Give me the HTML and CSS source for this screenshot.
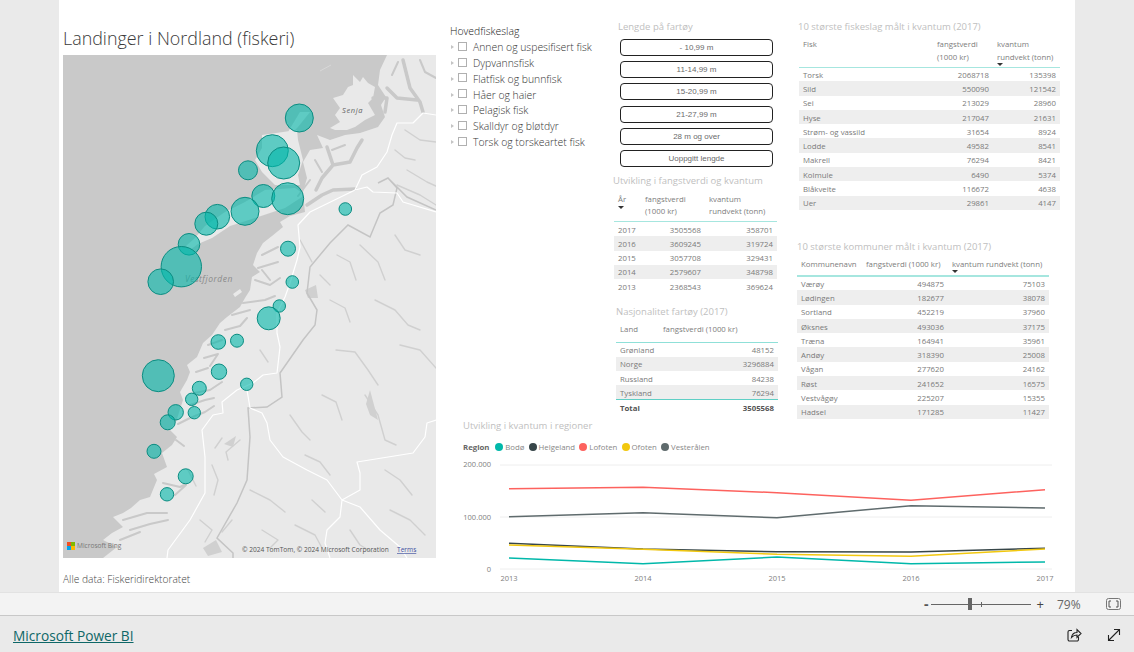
FILE: index.html
```html
<!DOCTYPE html>
<html lang="no">
<head>
<meta charset="utf-8">
<title>Landinger i Nordland (fiskeri)</title>
<link rel="stylesheet" href="styles.css">
</head>
<body>
<main class="stage">
  <div class="canvas">
    <section class="left-col">
      <h1 class="report-title">Landinger i Nordland (fiskeri)</h1>
      <svg class="map" viewBox="63 55 373 503" role="img" aria-label="Kart over Nordland">
        <rect class="sea" x="63" y="55" width="373" height="503"/>
        <path class="land" d="M436 55V558H103L117 547 103 540 112 533 123 527 113 517 123 513 131 508 140 500 150 497 157 480 154 474 167 467 162 453 172 445 177 437 170 430 176 422 183 400 180 392 187 380 190 372 187 365 197 357 203 343 212 335 220 323 227 317 240 307 245 298 250 290 252 277 260 272 253 265 257 253 263 243 272 236 283 227 280 222 290 216 305 212 303 192 307 178 303 162 310 150 323 148 317 135 330 140 345 135 360 133 378 127 385 117 381 105 386 97 378 85 380 70 387 55Z"/>
        <path class="land" d="M353 75 360 82 363 77 368 83 375 87 373 98 368 103 375 115 365 120 355 127 347 130 335 130 330 128 340 122 335 115 340 108 333 98 343 95 348 87 353 85ZM262 135 283 132 297 130 298 140 303 160 298 175 300 185 275 185 262 172 255 160 262 148ZM310 112 298 127 295 130 288 132 300 112ZM186 246 195 238 205 226 225 212 245 202 265 190 295 188 305 195 285 208 255 218 230 226 212 238 198 244 190 250ZM233 294 240 289 242 292 235 297Z"/>
        <path class="fjord-wide" d="M307 205 322 195 333 190 355 189M333 165 350 162 357 148 362 140M327 147 333 165 322 178 316 190M403 60 410 88 420 102 423 112M387 88 397 98 417 100M373 98 387 98 385 112"/>
        <path class="fjord" d="M420 60 425 72 436 78M398 62 392 75M332 150 345 145M315 160 322 172M310 180 298 196M262 255 278 247M258 268 278 262M270 280 262 270M255 280 270 285 280 278M243 303 265 300 275 296M232 315 250 310M225 330 240 326 247 318M208 345 222 340M204 358 218 354 210 366M196 372 208 368M194 393 210 390 222 382M190 405 205 400 214 398M178 424 190 418 205 412 214 406M176 440 184 446M163 483 180 487 186 484M175 495 186 485M123 520 147 513 167 513M130 530 150 524 168 520M120 540 140 532"/>
        <path class="water" d="M397 185 420 195 436 205M407 170 427 182 436 186M405 130 420 140 436 142M395 150 405 158 415 160M360 245 378 262 385 280M395 235 405 250 420 255M337 255 350 262 356 280M330 300 345 308 350 322M375 300 395 310 408 325 420 330M400 345 420 350 436 368M336 350 355 352 368 370 378 385M322 395 336 402 342 420M290 415 302 432 310 440M365 395 378 415 385 440 396 445M305 455 320 462 330 475M385 470 400 480 412 495M240 440 226 452 228 460M212 465 218 480 214 495M250 490 270 500 285 512M295 525 315 535 322 548M350 530 360 545 372 552M390 510 410 520 425 535M200 520 212 530 205 542M300 240 312 262M320 275 330 285M260 350 268 362M215 448 222 438M312 500 325 512M262 530 278 540 270 548M188 470 196 486M232 520 222 532"/>
        <path class="lake" d="M224 444 236 436 233 447ZM366 404 370 390 374 405 378 420 370 415ZM305 290 316 285 318 298 308 298ZM203 548 216 540 222 552 208 556Z"/>
        <path class="border-line" d="M378 183 388 178 397 188 393 205 380 213 370 237 348 225 330 243 310 267 307 293 317 310 315 325 303 340 280 373 282 397 267 407 248 408 250 437 247 480 237 503 217 538 233 553V558M388 178 407 197 436 210"/>
        <path class="road" d="M436 115 423 113 413 123 397 123 392 135 387 152 377 167 362 175 355 190 310 212 298 225 300 247 297 260 290 283 285 297 277 313 277 333 280 347 277 373 263 375 253 383 237 390 222 402 223 413 213 415 202 430 205 457 205 493 190 520 168 550 167 558M355 190 367 187 373 192 397 193 403 202 436 212M247 390 250 408 262 413 267 423 270 440 283 457 307 470 327 480 342 500 360 490 360 473 357 462 413 453 425 437 427 423 436 420M342 500 340 517 327 530 325 543 330 558M342 500 360 507 380 530 400 547 407 558"/>
        <path class="streak" d="M320 71 331 65"/>
        <text class="place" x="342" y="113">Senja</text>
        <text class="place place-wide" x="185" y="282">Vestfjorden</text>
        <g class="bubbles">
          <circle cx="299.3" cy="118" r="14"/><circle cx="272.3" cy="150.7" r="16"/><circle cx="283.7" cy="163" r="16"/>
          <circle cx="248" cy="170.3" r="9.5"/><circle cx="263.3" cy="196" r="11.5"/><circle cx="287.7" cy="198.7" r="16"/>
          <circle cx="245" cy="211.3" r="14"/><circle cx="217.3" cy="216.7" r="12.3"/><circle cx="206.3" cy="223.7" r="11.5"/>
          <circle cx="189" cy="244.3" r="10.8"/><circle cx="181.3" cy="266.7" r="20.2"/><circle cx="160.7" cy="281.7" r="12.8"/>
          <circle cx="345.3" cy="209" r="6.3"/><circle cx="288" cy="248.7" r="7.5"/><circle cx="292.3" cy="282" r="6.3"/>
          <circle cx="279.3" cy="306" r="6.2"/><circle cx="268.7" cy="318.3" r="11.5"/><circle cx="218.3" cy="342" r="7.3"/>
          <circle cx="237" cy="340.7" r="6.5"/><circle cx="158.3" cy="375.7" r="16"/><circle cx="219" cy="371.7" r="7.7"/>
          <circle cx="199.3" cy="388.3" r="7"/><circle cx="246.7" cy="384.3" r="6.2"/><circle cx="191.7" cy="399.3" r="6.2"/>
          <circle cx="175.7" cy="412.3" r="7.7"/><circle cx="194.3" cy="412.7" r="6.2"/><circle cx="167.7" cy="422.3" r="7.5"/>
          <circle cx="154" cy="451.3" r="7"/><circle cx="185.7" cy="476.3" r="7.5"/><circle cx="167" cy="494.3" r="6.7"/>
        </g>
        <rect class="ms-red" x="67" y="542" width="4" height="4"/><rect class="ms-green" x="71" y="542" width="4" height="4"/>
        <rect class="ms-blue" x="67" y="546" width="4" height="4"/><rect class="ms-yellow" x="71" y="546" width="4" height="4"/>
        <text class="attrib attrib-bing" x="77" y="548">Microsoft Bing</text>
        <text class="attrib" x="242" y="552">© 2024 TomTom, © 2024 Microsoft Corporation</text>
        <text class="attrib terms" x="397" y="552">Terms</text>
      </svg>
      <p class="caption">Alle data: Fiskeridirektoratet</p>
    </section>

    <div class="right-area">
      <div class="top-row">
        <section class="slicer">
          <h2 class="slicer-title">Hovedfiskeslag</h2>
          <ul class="slicer-list">
            <li class="slicer-item"><span class="chevron"></span><span class="check"></span>Annen og uspesifisert fisk</li>
            <li class="slicer-item"><span class="chevron"></span><span class="check"></span>Dypvannsfisk</li>
            <li class="slicer-item"><span class="chevron"></span><span class="check"></span>Flatfisk og bunnfisk</li>
            <li class="slicer-item"><span class="chevron"></span><span class="check"></span>Håer og haier</li>
            <li class="slicer-item"><span class="chevron"></span><span class="check"></span>Pelagisk fisk</li>
            <li class="slicer-item"><span class="chevron"></span><span class="check"></span>Skalldyr og bløtdyr</li>
            <li class="slicer-item"><span class="chevron"></span><span class="check"></span>Torsk og torskeartet fisk</li>
          </ul>
        </section>

        <section class="mid-col">
          <h2 class="visual-title title-length">Lengde på fartøy</h2>
          <div class="length-buttons">
            <button class="length-btn">- 10,99 m</button>
            <button class="length-btn">11-14,99 m</button>
            <button class="length-btn">15-20,99 m</button>
            <button class="length-btn">21-27,99 m</button>
            <button class="length-btn">28 m og over</button>
            <button class="length-btn">Uoppgitt lengde</button>
          </div>
          <h2 class="visual-title title-dev">Utvikling i fangstverdi og kvantum</h2>
          <table class="data t-dev">
            <colgroup><col class="c27"><col class="c64"><col class="c72"></colgroup>
            <thead><tr><th>År<span class="sort"></span></th><th>fangstverdi<br>(1000 kr)</th><th>kvantum<br>rundvekt (tonn)</th></tr></thead>
            <tbody>
              <tr><td>2017</td><td class="num">3505568</td><td class="num">358701</td></tr>
              <tr><td>2016</td><td class="num">3609245</td><td class="num">319724</td></tr>
              <tr><td>2015</td><td class="num">3057708</td><td class="num">329431</td></tr>
              <tr><td>2014</td><td class="num">2579607</td><td class="num">348798</td></tr>
              <tr><td>2013</td><td class="num">2368543</td><td class="num">369624</td></tr>
            </tbody>
          </table>
          <h2 class="visual-title title-nat">Nasjonalitet fartøy (2017)</h2>
          <table class="data t-nat">
            <colgroup><col class="c43"><col class="c119"></colgroup>
            <thead><tr><th>Land</th><th>fangstverdi (1000 kr)</th></tr></thead>
            <tbody>
              <tr><td>Grønland</td><td class="num">48152</td></tr>
              <tr><td>Norge</td><td class="num">3296884</td></tr>
              <tr><td>Russland</td><td class="num">84238</td></tr>
              <tr><td>Tyskland</td><td class="num">76294</td></tr>
            </tbody>
            <tfoot><tr><td>Total</td><td class="num">3505568</td></tr></tfoot>
          </table>
        </section>

        <section class="right-col">
          <h2 class="visual-title title-fish">10 største fiskeslag målt i kvantum (2017)</h2>
          <table class="data t-fish">
            <colgroup><col class="c134"><col class="c60"><col class="c67"></colgroup>
            <thead><tr><th>Fisk</th><th>fangstverdi<br>(1000 kr)</th><th>kvantum<br>rundvekt (tonn)<span class="sort sort-tight"></span></th></tr></thead>
            <tbody>
              <tr><td>Torsk</td><td class="num">2068718</td><td class="num">135398</td></tr>
              <tr><td>Sild</td><td class="num">550090</td><td class="num">121542</td></tr>
              <tr><td>Sei</td><td class="num">213029</td><td class="num">28960</td></tr>
              <tr><td>Hyse</td><td class="num">217047</td><td class="num">21631</td></tr>
              <tr><td>Strøm- og vassild</td><td class="num">31654</td><td class="num">8924</td></tr>
              <tr><td>Lodde</td><td class="num">49582</td><td class="num">8541</td></tr>
              <tr><td>Makrell</td><td class="num">76294</td><td class="num">8421</td></tr>
              <tr><td>Kolmule</td><td class="num">6490</td><td class="num">5374</td></tr>
              <tr><td>Blåkveite</td><td class="num">116672</td><td class="num">4638</td></tr>
              <tr><td>Uer</td><td class="num">29861</td><td class="num">4147</td></tr>
            </tbody>
          </table>
          <h2 class="visual-title title-mun">10 største kommuner målt i kvantum (2017)</h2>
          <table class="data t-mun">
            <colgroup><col class="c65"><col class="c86"><col class="c101"></colgroup>
            <thead><tr><th>Kommunenavn</th><th>fangstverdi (1000 kr)</th><th>kvantum rundvekt (tonn)<span class="sort sort-tight"></span></th></tr></thead>
            <tbody>
              <tr><td>Værøy</td><td class="num">494875</td><td class="num">75103</td></tr>
              <tr><td>Lødingen</td><td class="num">182677</td><td class="num">38078</td></tr>
              <tr><td>Sortland</td><td class="num">452219</td><td class="num">37960</td></tr>
              <tr><td>Øksnes</td><td class="num">493036</td><td class="num">37175</td></tr>
              <tr><td>Træna</td><td class="num">164941</td><td class="num">35961</td></tr>
              <tr><td>Andøy</td><td class="num">318390</td><td class="num">25008</td></tr>
              <tr><td>Vågan</td><td class="num">277620</td><td class="num">24162</td></tr>
              <tr><td>Røst</td><td class="num">241652</td><td class="num">16575</td></tr>
              <tr><td>Vestvågøy</td><td class="num">225207</td><td class="num">15355</td></tr>
              <tr><td>Hadsel</td><td class="num">171285</td><td class="num">11427</td></tr>
            </tbody>
          </table>
        </section>
      </div>

      <section class="chart">
        <h2 class="visual-title chart-title">Utvikling i kvantum i regioner</h2>
        <ul class="legend">
          <li class="legend-name">Region</li>
          <li class="legend-item"><span class="dot dot-bodo"></span>Bodø</li>
          <li class="legend-item"><span class="dot dot-helge"></span>Helgeland</li>
          <li class="legend-item"><span class="dot dot-lofoten"></span>Lofoten</li>
          <li class="legend-item"><span class="dot dot-ofoten"></span>Ofoten</li>
          <li class="legend-item"><span class="dot dot-vest"></span>Vesterålen</li>
        </ul>
        <svg class="line-chart" viewBox="463 456 597 130" role="img" aria-label="Linjediagram">
          <line class="grid" x1="500" y1="465" x2="1052" y2="465"/>
          <line class="grid" x1="500" y1="517" x2="1052" y2="517"/>
          <line class="grid" x1="500" y1="569" x2="1052" y2="569"/>
          <text class="axis" x="491" y="467" text-anchor="end">200.000</text>
          <text class="axis" x="491" y="520" text-anchor="end">100.000</text>
          <text class="axis" x="491" y="572" text-anchor="end">0</text>
          <text class="axis" x="509" y="581" text-anchor="middle">2013</text>
          <text class="axis" x="643" y="581" text-anchor="middle">2014</text>
          <text class="axis" x="777" y="581" text-anchor="middle">2015</text>
          <text class="axis" x="911" y="581" text-anchor="middle">2016</text>
          <text class="axis" x="1045" y="581" text-anchor="middle">2017</text>
          <polyline class="ln ln-lofoten" points="509,488.7 643,487.3 777,492.7 911,500.3 1045,489.7"/>
          <polyline class="ln ln-vest" points="509,516.7 643,512.7 777,517.7 911,505.7 1045,508"/>
          <polyline class="ln ln-helge" points="509,543.3 643,549 777,551.7 911,552 1045,548.3"/>
          <polyline class="ln ln-ofoten" points="509,545 643,549.3 777,554.3 911,556.3 1045,549"/>
          <polyline class="ln ln-bodo" points="509,558 643,563.7 777,557 911,563.7 1045,562"/>
        </svg>
      </section>
    </div>
  </div>
</main>

<div class="statusbar">
  <span class="zoom-minus">-</span>
  <div class="slider"><span class="slider-tick"></span><span class="slider-thumb"></span></div>
  <span class="zoom-plus">+</span>
  <span class="zoom-value">79%</span>
  <svg class="fit-icon" viewBox="0 0 15 12" aria-hidden="true">
    <rect class="fit-frame" x="0.5" y="0.5" width="14" height="11" rx="2"/>
    <path class="fit-corner" d="M5 3H3v6h2M10 3h2v6h-2"/>
  </svg>
</div>

<footer class="footer">
  <a class="pbi-link" href="#">Microsoft Power BI</a>
  <div class="footer-icons">
    <svg class="foot-icon" viewBox="0 0 16 16" aria-hidden="true">
      <path d="M6 3.5H3.5A1.5 1.5 0 0 0 2 5v7.5A1.5 1.5 0 0 0 3.5 14H11a1.5 1.5 0 0 0 1.5-1.5V10"/>
      <path d="M5.5 10.5C6 7.5 8.300 5.500 11 5.500V2.500L15 6.500 11 10.500V8C9 8 7 8.800 5.500 10.500Z"/>
    </svg>
    <svg class="foot-icon" viewBox="0 0 16 16" aria-hidden="true">
      <path d="M2.500 13.500 13.500 2.500M8 2.500H13.500V8M2.500 8V13.500H8"/>
    </svg>
  </div>
</footer>
</body>
</html>
```

FILE: styles.css
```css
* { box-sizing: border-box; }
html, body { margin: 0; height: 652px; overflow: hidden; }
body {
  display: flex;
  flex-direction: column;
  font-family: "Open Sans", "Noto Sans", "Liberation Sans", sans-serif;
  background: #eaeaea;
  color: #555;
}
h1, h2, p, ul { margin: 0; padding: 0; font-weight: 400; }
ul { list-style: none; }

.stage { height: 592px; padding: 0 59px; background: #eaeaea; }
.canvas { display: flex; height: 592px; padding-left: 4px; background: #fff; }

.left-col { width: 373px; flex: none; }
.report-title {
  height: 24px;
  margin: 26px 0 5px;
  font-size: 17.900px;
  line-height: 24px;
  font-weight: 300;
  color: #3a3a3a;
  white-space: nowrap;
}
.map { display: block; width: 373px; height: 503px; }
.sea { fill: #c9c9c9; }
.land { fill: #e9e9e9; }
.fjord-wide { fill: none; stroke: #c9c9c9; stroke-width: 3.500; stroke-linejoin: round; stroke-linecap: round; }
.fjord { fill: none; stroke: #c9c9c9; stroke-width: 2; stroke-linejoin: round; stroke-linecap: round; }
.water { fill: none; stroke: #d0d0d0; stroke-width: 1.400; stroke-linejoin: round; stroke-linecap: round; }
.lake { fill: #d0d0d0; }
.border-line { fill: none; stroke: #c4c4c4; stroke-width: 1.500; }
.road { fill: none; stroke: #fff; stroke-width: 1.200; stroke-linejoin: round; }
.streak { fill: none; stroke: #d8d8d8; stroke-width: 1; }
.place { font-size: 7.500px; font-style: italic; letter-spacing: .6px; fill: #666; }
.place-wide { font-size: 8.500px; letter-spacing: .5px; fill: #8a8a8a; }
.bubbles circle { fill: #01b8aa; fill-opacity: .6; stroke: #0b8c81; stroke-width: 1; }
.ms-red { fill: #f25022; }
.ms-green { fill: #7fba00; }
.ms-blue { fill: #00a4ef; }
.ms-yellow { fill: #ffb900; }
.attrib { font-size: 6.600px; fill: #555; }
.attrib-bing { fill: #777; }
.terms { fill: #3f4f9f; text-decoration: underline; }
.caption { margin-top: 14px; font-size: 10.200px; line-height: 14px; font-weight: 300; color: #444; }

.right-area { margin-left: 14px; flex: 1; min-width: 0; }
.top-row { display: flex; height: 419px; }

.slicer { width: 163px; flex: none; padding-top: 24px; }
.slicer-title { font-size: 10.400px; line-height: 14px; font-weight: 300; color: #222; }
.slicer-list { margin-top: 1.400px; }
.slicer-item { display: flex; align-items: center; height: 15.800px; font-size: 10.400px; font-weight: 300; color: #333; white-space: nowrap; }
.chevron {
  width: 0; height: 0; margin: 0 4px 0 1px;
  border-left: 3px solid #c4c4c4;
  border-top: 2.500px solid transparent;
  border-bottom: 2.500px solid transparent;
}
.check { width: 9px; height: 9px; margin: -2px 6px 0 0; border: 1px solid #b0b0b0; }

.visual-title { font-size: 9.500px; line-height: 14px; color: #c0c0c0; white-space: nowrap; }
.mid-col { width: 165px; flex: none; padding-top: 20px; }
.title-length { margin-left: 5px; }
.length-buttons { display: flex; flex-direction: column; gap: 5.200px; width: 153px; margin: 5px 0 0 7px; }
.length-btn {
  height: 17px; padding: 0;
  background: #fff; border: 1px solid #222; border-radius: 4px;
  font-family: "Liberation Sans", sans-serif; font-size: 8px; color: #6a6a6a;
}
.title-dev { margin-top: 7px; }
.title-nat { margin: 12px 0 0 3px; }

.data { border-collapse: collapse; table-layout: fixed; }
.data th {
  padding: 0 4px; font-size: 7.800px; line-height: 12.500px; font-weight: 400;
  color: #7d7d7d; text-align: left; vertical-align: top; white-space: nowrap;
  border-bottom: 1.500px solid #a6e6df;
}
.data td { height: 14.300px; padding: 1px 4px 0; font-size: 7.800px; line-height: 10px; color: #7a7a7a; white-space: nowrap; }
.data tbody tr:nth-child(even) td { background: #eeeeee; }
.data .num { text-align: right; }
.sort {
  display: block; width: 0; height: 0; margin-top: 1px;
  border-top: 3px solid #333;
  border-left: 3px solid transparent;
  border-right: 3px solid transparent;
}
.sort-tight { margin-top: 0; }
.c27 { width: 27px; } .c64 { width: 64px; } .c72 { width: 72px; }
.c43 { width: 43px; } .c119 { width: 119px; }
.c134 { width: 134px; } .c60 { width: 60px; } .c67 { width: 67px; }
.c65 { width: 65px; } .c86 { width: 86px; } .c101 { width: 101px; }
.t-dev { width: 163px; margin: 1px 0 0 1px; }
.t-dev th { height: 33px; padding-top: 4px; }
.t-nat { width: 162px; margin-left: 3px; }
.t-nat th { height: 23px; padding-top: 4px; border-bottom-color: #8fe0d8; }
.t-nat tfoot td { height: 15px; font-weight: 700; color: #555; border-top: 1.500px solid #5fcfc5; }
.right-col { width: 263px; margin-left: 19px; flex: none; padding-top: 20px; }
.title-fish { margin-left: 1px; }
.t-fish { width: 261px; margin-left: 2px; }
.t-fish th { height: 33px; padding-top: 4px; }
.title-mun { margin-top: 30px; }
.t-mun { width: 252px; }
.t-mun th { height: 22px; padding-top: 4px; border-bottom-width: 2px; }

.chart { padding-left: 13px; }
.chart-title { line-height: 14px; }
.legend { display: flex; align-items: center; gap: 4.200px; height: 14px; margin-top: 7px; font-size: 7.800px; color: #888; }
.legend-name { font-weight: 700; color: #666; margin-right: 1.500px; }
.legend-item { display: flex; align-items: center; gap: 2px; }
.dot { width: 8px; height: 8px; border-radius: 50%; }
.dot-bodo { background: #01b8aa; }
.dot-helge { background: #374649; }
.dot-lofoten { background: #fd625e; }
.dot-ofoten { background: #f2c80f; }
.dot-vest { background: #5f6b6d; }
.line-chart { display: block; width: 597px; height: 130px; margin-top: 2px; }
.grid { stroke: #eeeeee; stroke-width: 1; }
.axis { font-size: 7.500px; fill: #808080; }
.ln { fill: none; stroke-width: 1.500; }
.ln-bodo { stroke: #01b8aa; }
.ln-helge { stroke: #374649; }
.ln-lofoten { stroke: #fd625e; }
.ln-ofoten { stroke: #f2c80f; }
.ln-vest { stroke: #5f6b6d; }

.statusbar {
  display: flex; align-items: center; height: 24px; padding-right: 13px;
  justify-content: flex-end;
  background: #f3f3f3;
  border-top: 1px solid #e2e2e2;
  border-bottom: 1px solid #c8c8c8;
}
.zoom-minus { font-size: 14px; font-weight: 700; color: #555; margin-right: 2px; line-height: 1; }
.slider { position: relative; width: 100px; height: 1px; background: #666; }
.slider-tick { position: absolute; left: 50px; top: -2px; width: 1px; height: 5px; background: #666; }
.slider-thumb { position: absolute; left: 37px; top: -6px; width: 4px; height: 12px; background: #666; }
.zoom-plus { margin: 0 0 0 6px; font-size: 13px; line-height: 1; color: #444; }
.zoom-value { width: 26px; margin-left: 13px; font-size: 12px; color: #666; }
.fit-icon { width: 15px; height: 12px; margin-left: 23px; }
.fit-frame { fill: none; stroke: #777; stroke-width: 1; }
.fit-corner { fill: none; stroke: #555; stroke-width: 1; }

.footer {
  display: flex; align-items: center; justify-content: space-between;
  height: 36px; padding: 2px 12px 0 13px; background: #eaeaea;
}
.pbi-link { font-size: 13.700px; color: #0e6767; text-decoration: underline; }
.footer-icons { display: flex; gap: 24px; }
.foot-icon { width: 16px; height: 16px; fill: none; stroke: #222; stroke-width: 1.100; }
```
